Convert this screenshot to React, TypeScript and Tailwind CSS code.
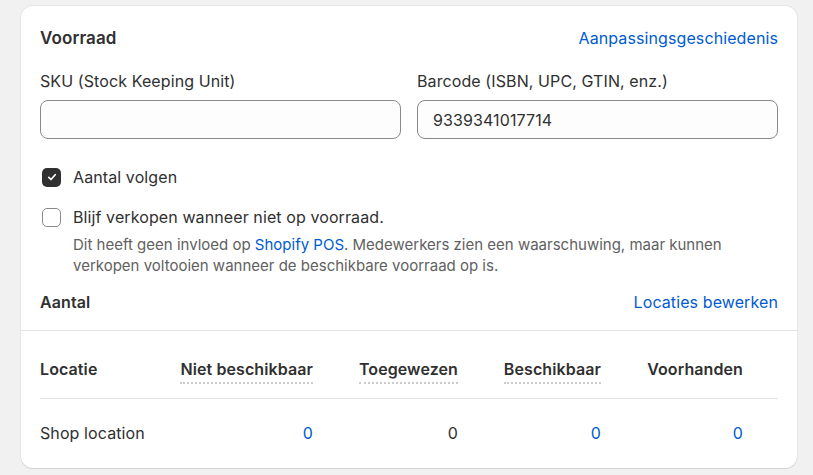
import React from "react";

const font = { fontFamily: "Inter, 'Noto Sans', sans-serif" };

const Checkbox: React.FC<{ checked?: boolean }> = ({ checked }) =>
  checked ? (
    <span className="flex h-[19px] w-[19px] shrink-0 items-center justify-center rounded-[5px] bg-[#303030]">
      <svg width="12" height="12" viewBox="0 0 12 12" fill="none">
        <path d="M2.8 6.3l2.2 2.2 4.2-4.8" stroke="#fff" strokeWidth="1.7" strokeLinecap="round" strokeLinejoin="round" />
      </svg>
    </span>
  ) : (
    <span className="block h-[19px] w-[19px] shrink-0 rounded-[5px] border border-[#8a8a8a] bg-white" />
  );

const HeadCell: React.FC<{ label: string; dotted?: boolean }> = ({ label, dotted }) => (
  <div className="flex justify-end">
    <span
      className={`font-semibold ${dotted ? "border-b-2 border-dotted border-[#cccccc] pb-[1px]" : "pb-[3px]"}`}
    >
      {label}
    </span>
  </div>
);

const App: React.FC = () => {
  const columns = [
    { label: "Niet beschikbaar", dotted: true, value: "0", link: true },
    { label: "Toegewezen", dotted: true, value: "0", link: false },
    { label: "Beschikbaar", dotted: true, value: "0", link: true },
    { label: "Voorhanden", dotted: false, value: "0", link: true },
  ];

  return (
    <div className="min-h-screen bg-[#f1f1f1] pl-[21px] pr-[16px] pt-[6px] text-[16px] tracking-[0.1px] text-[#303030]" style={font}>
      <div className="rounded-[12px] bg-white shadow-[0_1px_0_0_#d4d4d4,0_0_0_1px_#e6e6e6]">
        {/* VOORRAAD */}
        <div className="px-[19px] pt-[20px] pb-[16px]">
          <div className="flex items-center justify-between leading-6">
            <h2 className="text-[17px] font-semibold">Voorraad</h2>
            <a className="text-[#005bd3]">Aanpassingsgeschiedenis</a>
          </div>

          <div className="mt-[21px] grid grid-cols-2 gap-4">
            <div>
              <label className="block leading-5">SKU (Stock Keeping Unit)</label>
              <div className="mt-[9px] h-[39px] rounded-[8px] border border-[#8a8a8a] bg-[#fdfdfd]" />
            </div>
            <div>
              <label className="block leading-5">Barcode (ISBN, UPC, GTIN, enz.)</label>
              <div className="mt-[9px] flex h-[39px] items-center rounded-[8px] border border-[#8a8a8a] bg-[#fdfdfd] px-[15px]">
                9339341017714
              </div>
            </div>
          </div>

          <div className="mt-[26px] flex items-center gap-[12px] pl-[2px] leading-6">
            <Checkbox checked />
            <span>Aantal volgen</span>
          </div>

          <div className="mt-[16px] flex items-start gap-[12px] pl-[2px]">
            <div className="pt-[3px]">
              <Checkbox />
            </div>
            <div>
              <div className="leading-6">Blijf verkopen wanneer niet op voorraad.</div>
              <p className="mt-[5px] text-[15px] leading-[21px] tracking-normal text-[#616161]">
                Dit heeft geen invloed op <a className="text-[#005bd3]">Shopify POS</a>. Medewerkers zien een
                waarschuwing, maar kunnen verkopen voltooien wanneer de beschikbare voorraad op is.
              </p>
            </div>
          </div>

          <div className="mt-[14px] flex items-center justify-between leading-6">
            <h3 className="font-semibold">Aantal</h3>
            <a className="text-[#005bd3]">Locaties bewerken</a>
          </div>
        </div>

        {/* TABLE */}
        <div className="border-t border-[#e3e3e3] px-[19px]">
          <div className="grid h-[68px] grid-cols-[125px_148px_145px_143px_142px] items-end border-b border-[#e3e3e3] pb-[14px]">
            <div className="pb-[3px] font-semibold">Locatie</div>
            {columns.map((c) => (
              <HeadCell key={c.label} label={c.label} dotted={c.dotted} />
            ))}
          </div>
          <div className="grid h-[69px] grid-cols-[125px_148px_145px_143px_142px] items-center pb-[2px]">
            <div>Shop location</div>
            {columns.map((c) => (
              <div key={c.label} className={`text-right ${c.link ? "text-[#005bd3]" : ""}`}>
                {c.value}
              </div>
            ))}
          </div>
        </div>
      </div>
    </div>
  );
};

export default App;
